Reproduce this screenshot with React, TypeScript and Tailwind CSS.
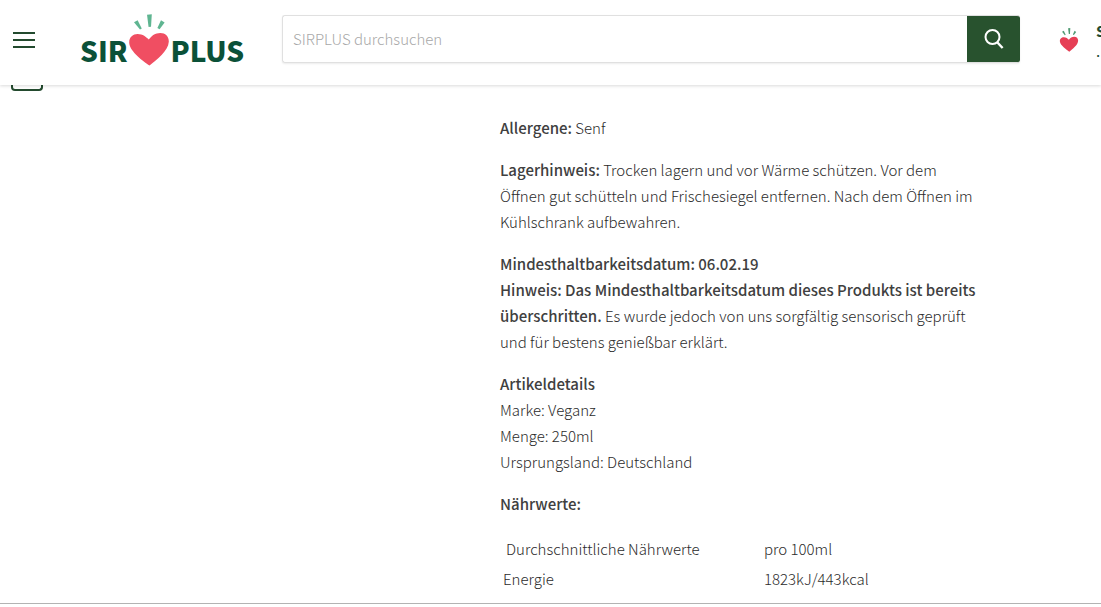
const details = ["Marke: Veganz", "Menge: 250ml", "Ursprungsland: Deutschland"];

const nutrition = [
  { name: "Energie", value: "1823kJ/443kcal" },
];

function HeartRays({ className, small }: { className: string; small?: boolean }) {
  return (
    <svg viewBox="0 0 40 52" className={className} aria-hidden="true">
      <g fill={small ? "#4f9a72" : "#5fb591"}>
        <path d="M5 8.2 L8.6 6.2 L12.8 14.4 L11 15.6 Z" />
        <path d="M18 0.8 L22.8 0.2 L22 12.8 L19.6 13 Z" />
        <path d="M32 6.2 L35.6 8.4 L30.6 15.2 L28.4 14 Z" />
      </g>
      <path
        d="M20.5 51.6 C14.5 47.5 1 37.5 0.3 29.5 C-0.4 23.5 3.8 20 8.6 20 C13.8 20 17.3 23 19.8 25.6 C22.6 21.8 26.3 19 31.3 19 C36.5 19 40 22.4 39.8 27.8 C39.4 37 27.5 45.8 20.5 51.6 Z"
        fill={small ? "#e63f55" : "#f04e62"}
      />
    </svg>
  );
}

function Header() {
  return (
    <header className="relative flex h-[85px] items-start overflow-x-clip bg-white shadow-[0_1px_3px_rgba(0,0,0,0.15)]">
      <button
        type="button"
        aria-label="Menü"
        className="ml-[13px] mt-8 flex w-[22px] shrink-0 flex-col gap-[5px]"
      >
        <span className="h-0.5 w-full bg-[#234a2e]" />
        <span className="h-0.5 w-full bg-[#234a2e]" />
        <span className="h-0.5 w-full bg-[#234a2e]" />
      </button>

      <a
        href="#"
        aria-label="SIRPLUS"
        className="ml-[45px] mt-3.5 flex h-[52px] w-[162px] shrink-0 items-end text-[28px] leading-8 font-black text-[#0b5138]"
      >
        <span className="flex w-[49px] justify-end pr-px">SIR</span>
        <HeartRays className="h-[52px] w-10 shrink-0" />
        <span className="pl-0.5">PLUS</span>
      </a>

      <form className="ml-10 mt-[15px] flex h-12 min-w-0 flex-1 rounded-[3px] shadow-[0_1px_2px_rgba(0,0,0,0.08)]">
        <input
          type="search"
          aria-label="SIRPLUS durchsuchen"
          placeholder="SIRPLUS durchsuchen"
          className="min-w-0 flex-1 rounded-l-[3px] border border-r-0 border-[#e0e0e0] px-2.5 text-[15px] font-light placeholder:text-[#a8a8a8] outline-none"
        />
        <button
          type="submit"
          aria-label="Suchen"
          className="flex w-[53px] items-center justify-center rounded-r-[3px] border-y border-[#e0e0e0] bg-[#28522e]"
        >
          <svg viewBox="0 0 20 20" className="size-5" fill="none" stroke="#fff">
            <circle cx="8.5" cy="8" r="7" strokeWidth="2" />
            <path d="M13.2 13.2 L18.6 19" strokeWidth="2.4" />
          </svg>
        </button>
      </form>

      <a href="#" className="ml-[39px] mt-7 flex w-[42px] shrink-0 gap-[17px]">
        <HeartRays small className="h-6 w-5 shrink-0" />
        <span className="-mt-[7px] text-[15px] leading-5 whitespace-nowrap text-[#234a2e]">
          <strong>S</strong>
          <br />.
        </span>
      </a>
    </header>
  );
}

export default function App() {
  return (
    <div className="overflow-x-clip bg-white font-['Noto_Sans_CJK_SC',sans-serif] text-[15px] leading-[26px] text-[#2b2b2b]">
      <Header />

      <main className="flex items-start">
        <aside className="w-[500px] shrink-0 pl-[11px]">
          <div className="h-1.5 w-8 rounded-b border-2 border-t-0 border-[#234a2e]" />
        </aside>

        <article className="max-w-[476px] flex-1 pt-[30px] pb-[9px] font-light [&_strong]:font-medium [&_strong]:text-[#404040]">
          <p className="mb-4">
            <strong>Allergene:</strong> Senf
          </p>
          <p className="mb-4">
            <strong>Lagerhinweis:</strong> Trocken lagern und vor Wärme schützen. Vor dem
            Öffnen gut schütteln und Frischesiegel entfernen. Nach dem Öffnen im
            Kühlschrank aufbewahren.
          </p>
          <p className="mb-4">
            <strong>Mindesthaltbarkeitsdatum: 06.02.19</strong>
            <br />
            <strong>
              Hinweis: Das Mindesthaltbarkeitsdatum dieses Produkts ist bereits
              überschritten.
            </strong>{" "}
            Es wurde jedoch von uns sorgfältig sensorisch geprüft und für bestens
            genießbar erklärt.
          </p>
          <div className="mb-4">
            <strong>Artikeldetails</strong>
            {details.map((line) => (
              <p key={line}>{line}</p>
            ))}
          </div>

          <table className="w-full table-fixed text-left">
            <caption className="mb-[17px] text-left">
              <strong>Nährwerte:</strong>
            </caption>
            <thead>
              <tr className="h-[30px]">
                <th className="w-[261px] pl-1.5 font-light">Durchschnittliche Nährwerte</th>
                <th className="pl-[3px] font-light">pro 100ml</th>
              </tr>
            </thead>
            <tbody>
              {nutrition.map((row) => (
                <tr key={row.name} className="h-[30px]">
                  <td className="pl-[3px]">{row.name}</td>
                  <td className="pl-[3px]">{row.value}</td>
                </tr>
              ))}
            </tbody>
          </table>
        </article>
      </main>

      <hr className="border-[#b3b3b3]" />
    </div>
  );
}
